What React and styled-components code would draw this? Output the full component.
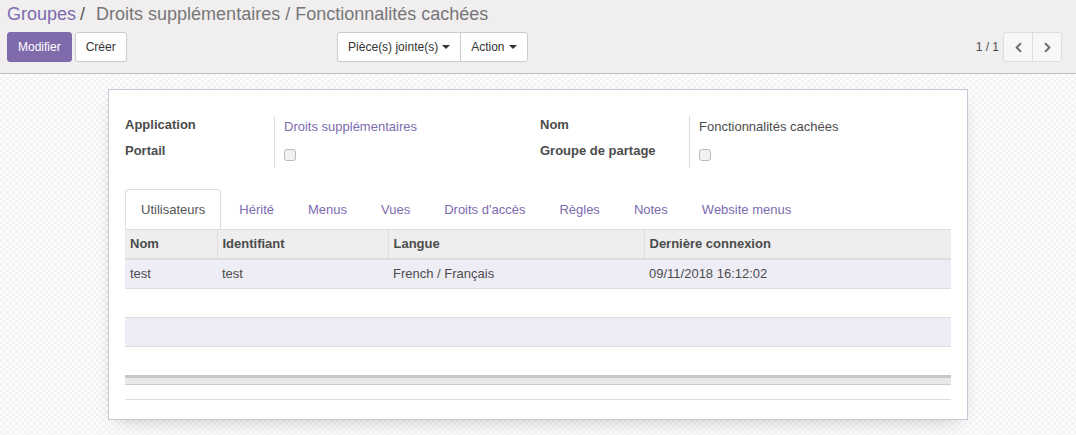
import React from 'react'
import styled, { createGlobalStyle } from 'styled-components'
import { ChevronLeft, ChevronRight } from 'lucide-react'

const GlobalStyle = createGlobalStyle`
    *, *::before, *::after {
        box-sizing: border-box;
    }
    html, body {
        margin: 0;
        padding: 0;
        height: 100%;
    }
    body {
        font-family: "Liberation Sans", Arial, sans-serif;
        font-size: 13px;
        color: #4c4c4c;
        background: #fff;
    }
`

const Page = styled.div`
    height: 435px;
    display: flex;
    flex-direction: column;
    overflow: hidden;
`

const ControlPanel = styled.div`
    background-color: #f0eeee;
    border-bottom: 1px solid #bdbdbd;
    padding: 3px 14px 11px 7px;
`

const Breadcrumb = styled.div`
    font-size: 18px;
    line-height: 22px;
    color: #777;
    white-space: nowrap;
`

const Crumb = styled.span`
    color: #7c6bae;
`

const Sep = styled.span`
    color: #555;
    padding: 0 6px 0 4px;
`

const ButtonRow = styled.div`
    display: flex;
    align-items: center;
    margin-top: 7px;
`

const Left = styled.div`
    width: 50%;
    display: flex;
    justify-content: space-between;
    padding-right: 7px;
`

const Right = styled.div`
    flex: 1;
    display: flex;
    justify-content: flex-end;
    align-items: center;
`

const Group = styled.div`
    display: flex;
    gap: ${p => p.gap || 0}px;
`

const Button = styled.button`
    font-family: inherit;
    font-size: 12px;
    line-height: 18px;
    height: 30px;
    padding: 5px 10px;
    border-radius: ${p => p.joined || '3px'};
    border: 1px solid ${p => p.primary ? '#7c6bae' : '#ccc'};
    background-color: ${p => p.primary ? '#7f6bab' : '#fff'};
    color: ${p => p.primary ? '#fff' : '#333'};
    display: flex;
    align-items: center;
    gap: 4px;
    cursor: pointer;
    & + & {
        margin-left: ${p => p.joined ? '-1px' : '0'};
    }
`

const Caret = styled.span`
    display: inline-block;
    width: 0;
    height: 0;
    border-left: 4px solid transparent;
    border-right: 4px solid transparent;
    border-top: 4px solid #333;
`

const PagerValue = styled.span`
    font-size: 12px;
    color: #4c4c4c;
    margin-right: 4px;
`

const PagerButton = styled.button`
    width: 30px;
    height: 30px;
    padding: 0;
    display: flex;
    align-items: center;
    justify-content: center;
    background: #f7f7f7;
    border: 1px solid #ddd;
    border-radius: ${p => p.side === 'left' ? '3px 0 0 3px' : '0 3px 3px 0'};
    color: #6f6f6f;
    & + & {
        margin-left: -1px;
    }
`

const Content = styled.div`
    flex: 1;
    padding-top: 15px;
    background-color: #fbfbfb;
    background-image: repeating-conic-gradient(#f3f3f3 0 25%, #fdfdfd 0 50%);
    background-size: 6px 6px;
`

const Sheet = styled.div`
    width: 860px;
    margin: 0 auto;
    background: #fff;
    border: 1px solid #c9c7d8;
    box-shadow: 0 6px 18px -10px rgba(0, 0, 0, 0.35);
    padding: 26px 16px 19px;
`

const FieldGroups = styled.div`
    display: grid;
    grid-template-columns: 415px 1fr;
`

const FieldGroup = styled.div`
    display: grid;
    grid-template-columns: 150px 1fr;
`

const Label = styled.div`
    font-weight: bold;
    padding-top: 1px;
    height: 26px;
    border-right: 1px solid #ddd;
`

const Value = styled.div`
    padding: 3px 0 0 9px;
    height: 26px;
    color: ${p => p.link ? '#7c6bae' : '#4c4c4c'};
`

const Checkbox = styled.span`
    display: inline-block;
    width: 12px;
    height: 12px;
    margin-top: 4px;
    border: 1px solid #bbb;
    border-radius: 3px;
    background: #f1f1f1;
`

const Tabs = styled.div`
    display: flex;
    margin-top: 21px;
`

const Tab = styled.div`
    padding: 11px 15px 10px;
    margin-right: 2px;
    line-height: 18px;
    border: 1px solid ${p => p.active ? '#ddd' : 'transparent'};
    border-bottom: none;
    border-radius: 4px 4px 0 0;
    color: ${p => p.active ? '#555' : '#7c6bae'};
    background: #fff;
`

const Table = styled.table`
    width: 100%;
    border-collapse: collapse;
    table-layout: fixed;
`

const Th = styled.th`
    text-align: left;
    font-weight: bold;
    padding: 5px;
    line-height: 18px;
    background: #eee;
    border-top: 1px solid #ddd;
    border-bottom: 2px solid #ddd;
    & + & {
        border-left: 1px solid #ddd;
    }
`

const Row = styled.tr`
    background: ${p => p.odd ? '#eeedf6' : '#fff'};
`

const Td = styled.td`
    box-sizing: content-box;
    padding: 5px;
    height: 18px;
    line-height: 18px;
    border-bottom: 1px solid #ddd;
`

const FootCell = styled.td`
    height: 8px;
    padding: 0;
    background: #e9e9e9;
    border-top: 3px solid #c8c8c8;
    border-bottom: 1px solid #ccc;
`

const Bottom = styled.div`
    height: 15px;
    border-bottom: 1px solid #ddd;
`

const tabs = ['Utilisateurs', 'Hérité', 'Menus', 'Vues', "Droits d'accès", 'Règles', 'Notes', 'Website menus']
const rows = [
    ['test', 'test', 'French / Français', '09/11/2018 16:12:02'],
    ['', '', '', ''],
    ['', '', '', ''],
    ['', '', '', ''],
]

const App = () => {
    return (
        <Page>
            <GlobalStyle />
            <ControlPanel>
                <Breadcrumb>
                    <Crumb>Groupes</Crumb><Sep>/</Sep> Droits supplémentaires / Fonctionnalités cachées
                </Breadcrumb>
                <ButtonRow>
                    <Left>
                        <Group gap={4}>
                            <Button primary>Modifier</Button>
                            <Button>Créer</Button>
                        </Group>
                        <Group>
                            <Button joined="3px 0 0 3px">Pièce(s) jointe(s) <Caret /></Button>
                            <Button joined="0 3px 3px 0">Action <Caret /></Button>
                        </Group>
                    </Left>
                    <Right>
                        <PagerValue>1 / 1</PagerValue>
                        <Group>
                            <PagerButton side="left"><ChevronLeft size={15} strokeWidth={3.2} /></PagerButton>
                            <PagerButton side="right"><ChevronRight size={15} strokeWidth={3.2} /></PagerButton>
                        </Group>
                    </Right>
                </ButtonRow>
            </ControlPanel>
            <Content>
                <Sheet>
                    <FieldGroups>
                        <FieldGroup>
                            <Label>Application</Label>
                            <Value link>Droits supplémentaires</Value>
                            <Label>Portail</Label>
                            <Value><Checkbox /></Value>
                        </FieldGroup>
                        <FieldGroup>
                            <Label>Nom</Label>
                            <Value>Fonctionnalités cachées</Value>
                            <Label>Groupe de partage</Label>
                            <Value><Checkbox /></Value>
                        </FieldGroup>
                    </FieldGroups>
                    <Tabs>
                        {tabs.map((t, i) => <Tab key={t} active={i === 0}>{t}</Tab>)}
                    </Tabs>
                    <Table>
                        <colgroup>
                            <col style={{ width: 92 }} />
                            <col style={{ width: 171 }} />
                            <col style={{ width: 256 }} />
                            <col />
                        </colgroup>
                        <thead>
                            <tr>
                                <Th>Nom</Th>
                                <Th>Identifiant</Th>
                                <Th>Langue</Th>
                                <Th>Dernière connexion</Th>
                            </tr>
                        </thead>
                        <tbody>
                            {rows.map((r, i) => (
                                <Row key={i} odd={i % 2 === 0}>
                                    {r.map((c, j) => <Td key={j}>{c}</Td>)}
                                </Row>
                            ))}
                        </tbody>
                        <tfoot>
                            <tr><FootCell colSpan={4} /></tr>
                        </tfoot>
                    </Table>
                    <Bottom />
                </Sheet>
            </Content>
        </Page>
    )
}

export default App
